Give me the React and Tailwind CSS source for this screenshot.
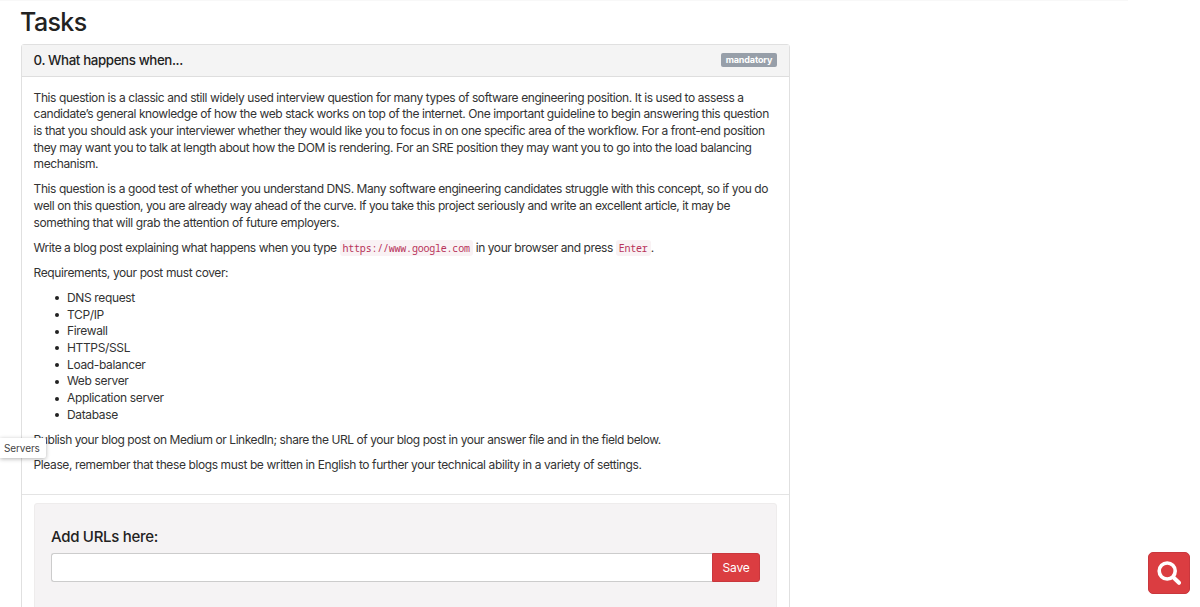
import React, { useState } from 'react';

const requirements = [
  'DNS request',
  'TCP/IP',
  'Firewall',
  'HTTPS/SSL',
  'Load-balancer',
  'Web server',
  'Application server',
  'Database',
];

function Paragraph({ children }) {
  return <p className="mb-[8.4px] whitespace-nowrap">{children}</p>;
}

function Line({ className = '', children }) {
  return <span className={`block ${className}`}>{children}</span>;
}

function Code({ children }) {
  return (
    <code className="rounded-[3px] bg-[#f9f2f4] px-[3px] py-px font-['Noto_Sans_Mono','DejaVu_Sans_Mono',monospace] text-[10px] tracking-[-0.22px] text-[#b8325a]">
      {children}
    </code>
  );
}

function TaskBody() {
  return (
    <div className="h-[418px] border-b border-[#e4e4e4] pr-3 pl-[11.6px] pt-[12.6px] text-[12px] leading-[16.68px] tracking-[-0.42px] text-[#333]">
      <Paragraph>
        <Line className="tracking-[-0.412px]">
          This question is a classic and still widely used interview question for many types of software engineering position. It is used to assess a
        </Line>
        <Line className="tracking-[-0.41px]">
          candidate’s general knowledge of how the web stack works on top of the internet. One important guideline to begin answering this question
        </Line>
        <Line className="tracking-[-0.435px]">
          is that you should ask your interviewer whether they would like you to focus in on one specific area of the workflow. For a front-end position
        </Line>
        <Line className="tracking-[-0.43px]">
          they may want you to talk at length about how the DOM is rendering. For an SRE position they may want you to go into the load balancing
        </Line>
        <Line className="tracking-[-0.4px]">mechanism.</Line>
      </Paragraph>
      <Paragraph>
        <Line className="tracking-[-0.425px]">
          This question is a good test of whether you understand DNS. Many software engineering candidates struggle with this concept, so if you do
        </Line>
        <Line className="tracking-[-0.45px]">
          well on this question, you are already way ahead of the curve. If you take this project seriously and write an excellent article, it may be
        </Line>
        <Line className="tracking-[-0.38px]">
          something that will grab the attention of future employers.
        </Line>
      </Paragraph>
      <Paragraph>
        <span className="tracking-[-0.45px]">Write a blog post explaining what happens when you type </span>
        <Code>https://www.google.com</Code> in your browser and press <Code>Enter</Code>.
      </Paragraph>
      <Paragraph>
        <Line className="tracking-[-0.39px]">Requirements, your post must cover:</Line>
      </Paragraph>
      <ul className="mb-[8.4px] pl-[21.4px] tracking-[-0.35px]">
        {requirements.map((item) => (
          <li key={item} className="flex items-center gap-2">
            <span className="h-1 w-1 rounded-full bg-[#222]" />
            {item}
          </li>
        ))}
      </ul>
      <Paragraph>
        <Line className="tracking-[-0.442px]">
          Publish your blog post on Medium or LinkedIn; share the URL of your blog post in your answer file and in the field below.
        </Line>
      </Paragraph>
      <Paragraph>
        <Line className="tracking-[-0.395px]">
          Please, remember that these blogs must be written in English to further your technical ability in a variety of settings.
        </Line>
      </Paragraph>
    </div>
  );
}

function UrlForm() {
  const [url, setUrl] = useState('');

  return (
    <div className="mx-3 mt-2 h-[140px] rounded-[3px] border border-[#eeecec] bg-[#f5f3f4] px-4 pt-[23px]">
      <h4 className="text-[15px] leading-[19px] font-medium tracking-[-0.3px] text-[#222]">Add URLs here:</h4>
      <div className="mt-[7px] flex h-[29px]">
        <input
          type="text"
          value={url}
          onChange={(e) => setUrl(e.target.value)}
          className="min-w-0 flex-1 rounded-l-[3px] border border-r-0 border-[#ccc] bg-white px-2 text-xs outline-none"
        />
        <button className="w-12 rounded-r-[3px] border border-[#c9373d] bg-[#db3d41] text-[12px] tracking-[-0.2px] text-white">
          Save
        </button>
      </div>
    </div>
  );
}

export default function App() {
  return (
    <div className="relative h-[607px] w-[1200px] overflow-hidden bg-white font-['Inter','Liberation_Sans',sans-serif] text-[#222]">
      <div className="h-px w-[1128px] bg-[#f8f8f8]" />
      <main className="ml-[21px] w-[769px]">
        <h2 className="-ml-px h-[43px] pt-[6px] text-[25px] leading-[30px] font-[450] tracking-[-0.6px]">Tasks</h2>
        <section className="h-[620px] rounded-[3px] border border-[#e0e0e0]">
          <div className="flex h-8 items-center justify-between border-b border-[#dedede] bg-[#f4f4f4] pr-3 pl-[11.6px]">
            <h3 className="pb-px text-[13.3px] leading-[18px] font-medium tracking-[-0.38px]">0. What happens when...</h3>
            <span className="mb-px flex h-[14px] w-14 items-center justify-center rounded-[2px] bg-[#979fa9] text-[9px] leading-[14px] font-bold tracking-[-0.15px] text-white">
              mandatory
            </span>
          </div>
          <TaskBody />
          <UrlForm />
        </section>
      </main>

      {/* Sidebar tooltip */}
      <div className="absolute top-[438px] left-0 flex h-5 w-[46px] items-center rounded-r-[2px] bg-white pl-1 text-[10px] tracking-[-0.1px] text-[#444] shadow-[0_1px_4px_rgba(0,0,0,0.3)]">
        Servers
      </div>

      {/* Floating search button */}
      <button className="absolute top-[552px] left-[1148px] flex h-[42px] w-[42px] items-center justify-center rounded-[5px] border border-[#c9373d] bg-[#db3d41]">
        <svg className="h-6 w-6" viewBox="0 0 24 24" fill="none" stroke="white" strokeLinecap="round">
          <circle cx="10.2" cy="10" r="8" strokeWidth="3.6" />
          <path d="M16.5 16.5L22 21.8" strokeWidth="4" />
        </svg>
      </button>
    </div>
  );
}
